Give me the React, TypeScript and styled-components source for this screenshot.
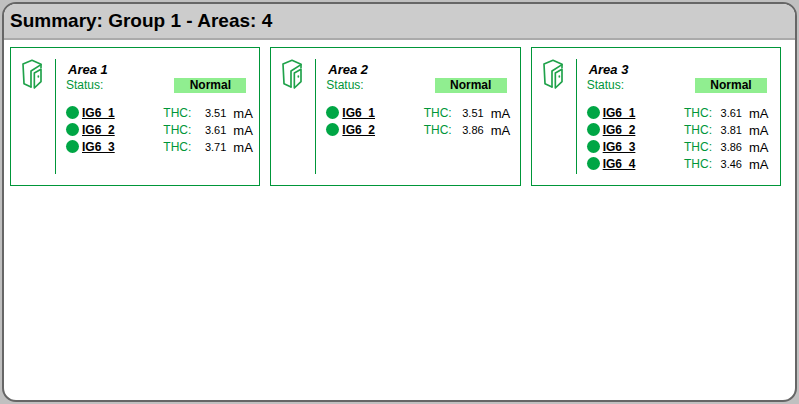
import React from "react";
import styled, { createGlobalStyle } from "styled-components";

const GREEN = "#009639";

const GlobalStyle = createGlobalStyle`
  *, *::before, *::after { box-sizing: border-box; }
  body {
    margin: 0;
    background: #c0c0c0;
    color: #000;
    font-family: "Liberation Sans", Arial, sans-serif;
    font-size: 12px;
  }
`;

const Page = styled.div`
  min-height: 100vh;
  padding: 2px;
  display: flex;
`;

const Panel = styled.main`
  flex: 1;
  border: 2px solid #666;
  border-radius: 14px;
  background: #fff;
  overflow: hidden;
`;

const Header = styled.header`
  padding: 5px 6px;
  background: #ccc;
  border-bottom: 2px solid #aaa;
`;

const Heading = styled.h1`
  margin: 0;
  font-size: 19px;
  line-height: 24px;
`;

const Areas = styled.div`
  display: grid;
  grid-template-columns: repeat(auto-fill, minmax(250px, 1fr));
  gap: 10px;
  padding: 7px 14px 7px 6px;
`;

const Card = styled.section`
  display: flex;
  gap: 13px;
  padding: 11px 0 11px 11px;
  border: 1px solid ${GREEN};
`;

const DoorIcon = styled.svg`
  flex: none;
  width: 20px;
  height: 30px;
  fill: none;
  stroke: #1fa24a;
  stroke-width: 5;
  stroke-linejoin: round;
  stroke-linecap: round;
`;

const Details = styled.div`
  flex: 1;
  min-height: 115px;
  padding: 3px 0 0 10px;
  border-left: 1px solid ${GREEN};
`;

const AreaName = styled.h2`
  margin: 0;
  padding-left: 2px;
  font-size: 13px;
  line-height: 16px;
  font-style: italic;
`;

const StatusRow = styled.div`
  display: flex;
  justify-content: space-between;
  padding-right: 13px;
  margin-bottom: 12px;
  line-height: 15px;
  color: ${GREEN};
`;

const Badge = styled.strong`
  width: 72px;
  background: #90ee90;
  color: #000;
  text-align: center;
`;

const Readings = styled.table`
  width: 100%;
  table-layout: fixed;
  border-collapse: collapse;
  line-height: 17px;
`;

const Cell = styled.td`
  height: 17px;
  padding: 0;
`;

const NameCell = styled.th`
  padding: 0;
  text-align: left;
`;

const Sensor = styled.div`
  display: flex;
  align-items: center;
  gap: 3px;
`;

const Dot = styled.span`
  width: 13px;
  height: 13px;
  margin-bottom: 2px;
  border-radius: 50%;
  background: #00a645;
`;

const SensorLink = styled.a`
  color: #000;
  text-decoration: underline;
  text-decoration-skip-ink: none;
`;

const LabelCell = styled(Cell)`
  width: 28px;
  color: ${GREEN};
`;

const ValueCell = styled(Cell)<{ $width: number }>`
  width: ${(p) => p.$width}px;
  font-size: 11px;
  text-align: right;
`;

const UnitCell = styled(Cell)<{ $valueWidth: number }>`
  width: ${(p) => 68 - p.$valueWidth}px;
  padding-left: 7px;
  font-size: 13px;
`;

type Area = { name: string; valueWidth: number; readings: string[] };

const areas: Area[] = [
  { name: "Area 1", valueWidth: 35, readings: ["3.51", "3.61", "3.71"] },
  { name: "Area 2", valueWidth: 32, readings: ["3.51", "3.86"] },
  { name: "Area 3", valueWidth: 30, readings: ["3.61", "3.81", "3.86", "3.46"] },
];

function AreaCard({ name, valueWidth, readings }: Area) {
  return (
    <Card>
      <DoorIcon viewBox="0 0 60 90" aria-hidden="true">
        <path d="M27 84 L6 74 L3 15 L30 4 L57 16 V26" />
        <path d="M27 84 V36 L57 17" />
        <path d="M37 87 V42 L57 31 V68 Z" />
        <path d="M49 51 V54" />
      </DoorIcon>
      <Details>
        <AreaName>{name}</AreaName>
        <StatusRow>
          <span>Status:</span>
          <Badge>Normal</Badge>
        </StatusRow>
        <Readings>
          <tbody>
            {readings.map((value, i) => (
              <tr key={i}>
                <NameCell scope="row">
                  <Sensor>
                    <Dot />
                    <SensorLink href={`#ig6-${i + 1}`}>{`IG6_${i + 1}`}</SensorLink>
                  </Sensor>
                </NameCell>
                <LabelCell>THC:</LabelCell>
                <ValueCell $width={valueWidth}>{value}</ValueCell>
                <UnitCell $valueWidth={valueWidth}>mA</UnitCell>
              </tr>
            ))}
          </tbody>
        </Readings>
      </Details>
    </Card>
  );
}

export default function App() {
  return (
    <Page>
      <GlobalStyle />
      <Panel>
        <Header>
          <Heading>Summary: Group 1 - Areas: 4</Heading>
        </Header>
        <Areas>
          {areas.map((area) => (
            <AreaCard key={area.name} {...area} />
          ))}
        </Areas>
      </Panel>
    </Page>
  );
}
